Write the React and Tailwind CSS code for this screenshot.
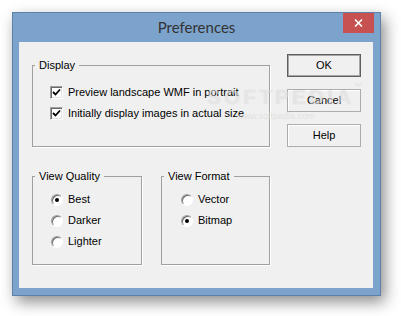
import { useState } from 'react';

const font = { fontFamily: '"Liberation Sans", Arial, sans-serif' };

function CheckBox({ checked, label }) {
  return (
    <label className="flex h-[21px] items-center gap-[5px]">
      <span className="flex h-[13px] w-[13px] items-center justify-center border border-t-[#a0a0a0] border-l-[#a0a0a0] border-b-white border-r-white bg-white shadow-[inset_1px_1px_0_#696969,inset_-1px_-1px_0_#e3e3e3]">
        {checked && (
          <svg width="9" height="9" viewBox="0 0 9 9">
            <path d="M1 4 L3.5 6.5 L8 1.5" fill="none" stroke="#000" strokeWidth="1.8" />
          </svg>
        )}
      </span>
      <span>{label}</span>
    </label>
  );
}

function Radio({ checked, label, onClick }) {
  return (
    <label className="flex h-[21px] items-center gap-[5px]" onClick={onClick}>
      <span className="flex h-[12px] w-[12px] items-center justify-center rounded-full border border-t-[#a0a0a0] border-l-[#a0a0a0] border-b-white border-r-white bg-white shadow-[inset_1px_1px_0_#696969]">
        {checked && <span className="h-[4px] w-[4px] rounded-full bg-black" />}
      </span>
      <span>{label}</span>
    </label>
  );
}

function Group({ title, className, children }) {
  return (
    <fieldset className={`border border-[#a0a0a0] shadow-[1px_1px_0_#fff] ${className}`}>
      <legend className="ml-[2px] px-[4px] leading-[13px]">{title}</legend>
      {children}
    </fieldset>
  );
}

function Button({ children, primary }) {
  return (
    <button
      className={`h-[23px] w-[74px] bg-[#f0f0f0] text-center ${
        primary
          ? 'border border-[#5e5e5e] shadow-[inset_0_0_0_1px_#a6a6a6]'
          : 'border border-[#adadad] shadow-[inset_1px_1px_0_#fff]'
      }`}
    >
      {children}
    </button>
  );
}

export default function App() {
  const [quality, setQuality] = useState('Best');
  const [format, setFormat] = useState('Bitmap');

  return (
    <div className="h-[316px] w-[401px] bg-white pl-[12px] pt-[12px] text-[11px] text-black" style={font}>
      <div className="flex h-[284px] w-[369px] flex-col border border-[#5d81a8] bg-[#7ca3cb] shadow-[4px_6px_14px_rgba(0,0,0,0.45)]">
        <div className="relative flex h-[29px] items-center justify-center">
          <span className="text-[15px] text-[#333]" style={{ fontFamily: 'Lato, "Open Sans", sans-serif' }}>
            Preferences
          </span>
          <div className="absolute right-[6px] top-0 flex h-[20px] w-[31px] items-center justify-center bg-[#c75050]">
            <svg width="9" height="8" viewBox="0 0 9 8">
              <path d="M1 0.5 L8 7.5 M8 0.5 L1 7.5" stroke="#fff" strokeWidth="1.6" />
            </svg>
          </div>
        </div>
        <div className="relative ml-[6px] flex h-[246px] w-[354px] items-start bg-[#f0f0f0] pl-[13px]">
          <div className="mt-[17px] flex w-[238px] flex-col">
            <Group title="Display" className="h-[88px] w-[238px]">
              <div className="pl-[17px] pt-[10px]">
                <CheckBox checked label="Preview landscape WMF in portrait" />
                <CheckBox checked label="Initially display images in actual size" />
              </div>
            </Group>
            <div className="mt-[23px] flex gap-[19px]">
              <Group title="View Quality" className="h-[95px] w-[110px]">
                <div className="pl-[18px] pt-[6px]">
                  {['Best', 'Darker', 'Lighter'].map((q) => (
                    <Radio key={q} label={q} checked={quality === q} onClick={() => setQuality(q)} />
                  ))}
                </div>
              </Group>
              <Group title="View Format" className="h-[95px] w-[109px]">
                <div className="pl-[19px] pt-[6px]">
                  {['Vector', 'Bitmap'].map((f) => (
                    <Radio key={f} label={f} checked={format === f} onClick={() => setFormat(f)} />
                  ))}
                </div>
              </Group>
            </div>
          </div>
          <div className="ml-[17px] mt-[12px] flex flex-col gap-[12px]">
            <Button primary>OK</Button>
            <Button>Cancel</Button>
            <Button>Help</Button>
          </div>
          <div className="pointer-events-none absolute left-[188px] top-[39px] text-[21px] font-bold tracking-[3px] text-white/40 [text-shadow:0_0_1px_rgba(160,160,160,0.35)]">
            SOFTPEDIA<span className="align-top text-[8px] tracking-normal">™</span>
          </div>
          <div className="pointer-events-none absolute left-[218px] top-[68px] text-[9px] text-[#d8d8d8]/70">
            www.softpedia.com
          </div>
        </div>
      </div>
    </div>
  );
}
